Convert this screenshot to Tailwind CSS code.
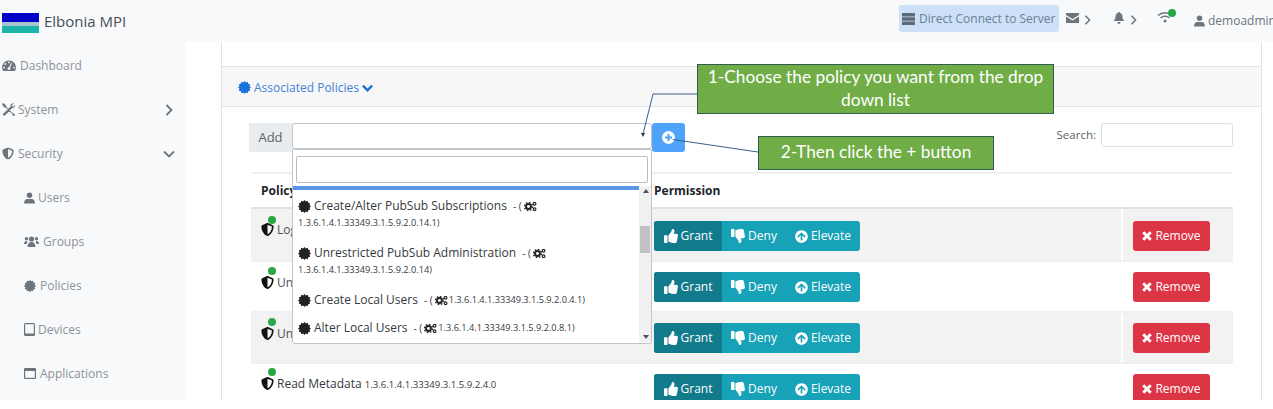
<!DOCTYPE html>
<html lang="en">
<head>
<meta charset="UTF-8">
<title>Elbonia MPI</title>
<script src="https://cdn.jsdelivr.net/npm/@tailwindcss/browser@4"></script>
</head>
<body class="relative w-[1273px] h-[409px] overflow-hidden bg-white font-['Open_Sans',sans-serif] text-[12px] text-[#6c757d]">

<svg class="hidden">
  <defs>
    <symbol id="cert" viewBox="0 0 16 16"><polygon fill="currentColor" points="16,8 14.18,9.66 14.93,12 12.53,12.53 12,14.93 9.66,14.18 8,16 6.34,14.18 4,14.93 3.47,12.53 1.07,12 1.82,9.66 0,8 1.82,6.34 1.07,4 3.47,3.47 4,1.07 6.34,1.82 8,0 9.66,1.82 12,1.07 12.53,3.47 14.93,4 14.18,6.34"/></symbol>
    <symbol id="shield" viewBox="0 0 512 512"><path fill="currentColor" d="M466.5 83.7l-192-80a48.15 48.15 0 0 0-36.9 0l-192 80C27.7 91.1 16 108.6 16 128c0 198.5 114.5 335.7 221.5 380.3 11.8 4.9 25.1 4.9 36.9 0C360.1 472.6 496 349.3 496 128c0-19.4-11.7-36.9-29.5-44.3zM256.1 446.3l-.1-381 175.9 73.3c-3.3 151.4-82.1 261.1-175.8 307.7z"/></symbol>
    <symbol id="cogs" viewBox="0 0 16 12"><circle cx="5.5" cy="6" r="3" fill="none" stroke="currentColor" stroke-width="2.400"/><circle cx="5.5" cy="6" r="5" fill="none" stroke="currentColor" stroke-width="1.600" stroke-dasharray="2 1.900"/><circle cx="13" cy="2.6" r="1.700" fill="none" stroke="currentColor" stroke-width="1.400"/><circle cx="13" cy="9.4" r="1.700" fill="none" stroke="currentColor" stroke-width="1.400"/></symbol>
    <symbol id="up" viewBox="0 0 512 512"><path fill="currentColor" d="M104 224H24c-13.255 0-24 10.745-24 24v240c0 13.255 10.745 24 24 24h80c13.255 0 24-10.745 24-24V248c0-13.255-10.745-24-24-24zM384 81.452c0 42.416-25.97 66.208-33.277 94.548h101.723c33.397 0 59.397 27.746 59.553 58.098.084 17.938-7.546 37.249-19.439 49.197l-.11.11c9.836 23.337 8.237 56.037-9.308 79.469 8.681 25.895-.069 57.704-16.382 74.757 4.298 17.598 2.244 32.575-6.148 44.632C440.202 511.587 389.616 512 346.839 512l-2.845-.001c-48.287-.017-87.806-17.598-119.56-31.725-15.957-7.099-36.821-15.887-52.651-16.178-6.54-.12-11.783-5.457-11.783-11.998v-213.77c0-3.2 1.282-6.271 3.558-8.521 39.614-39.144 56.648-80.587 89.117-113.111 14.804-14.832 20.188-37.236 25.393-58.902C282.515 39.293 291.817 0 312 0c24 0 72 8 72 81.452z"/></symbol>
    <symbol id="down" viewBox="0 0 512 512"><g transform="matrix(1 0 0 -1 0 512)"><path fill="currentColor" d="M104 224H24c-13.255 0-24 10.745-24 24v240c0 13.255 10.745 24 24 24h80c13.255 0 24-10.745 24-24V248c0-13.255-10.745-24-24-24zM384 81.452c0 42.416-25.97 66.208-33.277 94.548h101.723c33.397 0 59.397 27.746 59.553 58.098.084 17.938-7.546 37.249-19.439 49.197l-.11.11c9.836 23.337 8.237 56.037-9.308 79.469 8.681 25.895-.069 57.704-16.382 74.757 4.298 17.598 2.244 32.575-6.148 44.632C440.202 511.587 389.616 512 346.839 512l-2.845-.001c-48.287-.017-87.806-17.598-119.56-31.725-15.957-7.099-36.821-15.887-52.651-16.178-6.54-.12-11.783-5.457-11.783-11.998v-213.77c0-3.2 1.282-6.271 3.558-8.521 39.614-39.144 56.648-80.587 89.117-113.111 14.804-14.832 20.188-37.236 25.393-58.902C282.515 39.293 291.817 0 312 0c24 0 72 8 72 81.452z"/></g></symbol>
    <symbol id="arrow" viewBox="0 0 512 512"><path fill="currentColor" d="M8 256C8 119 119 8 256 8s248 111 248 248-111 248-248 248S8 393 8 256zm143.600 28.900l72.400-75.500V392c0 13.300 10.700 24 24 24h16c13.300 0 24-10.700 24-24V209.400l72.400 75.500c9.300 9.700 24.800 9.900 34.300.4l10.900-11c9.400-9.400 9.400-24.600 0-33.900L273 107.700c-9.400-9.400-24.600-9.400-33.900 0L106.300 240.400c-9.400 9.400-9.400 24.600 0 33.900l10.900 11c9.600 9.500 25.100 9.300 34.400-.4z"/></symbol>
    <symbol id="times" viewBox="0 0 12 12"><path fill="none" stroke="currentColor" stroke-width="3.400" d="M1.500 1.500l9 9M10.500 1.500l-9 9"/></symbol>
    <symbol id="right" viewBox="0 0 8 12"><path fill="none" stroke="currentColor" stroke-width="1.800" d="M1.500 1 6.500 6 1.500 11"/></symbol>
  </defs>
</svg>

<header class="h-[42px] bg-[#f8f9fa] flex items-center">
  <div class="w-[37px] h-[20px] ml-[2px] mt-[3px] flex flex-col">
    <div class="h-[9px] bg-[#0303c8]"></div>
    <div class="h-[4px] bg-[#a8c4cf]"></div>
    <div class="h-[7px] bg-[#1db5a9]"></div>
  </div>
  <span class="ml-[5px] text-[15px] text-[#495057]">Elbonia MPI</span>
  <div class="ml-auto flex items-center h-full text-[#6c757d]">
    <div class="w-[160px] h-[27px] -mt-[5px] rounded-[3px] bg-[#cce1f8] flex items-center pl-[3px] gap-[4px] text-[12px] text-[#6b7f93] whitespace-nowrap">
      <svg class="w-[13px] h-[12px]" viewBox="0 0 13 12"><path fill="#5d6b78" d="M0 0h13v3.400H0zM0 4.300h13v3.400H0zM0 8.600h13V12H0z"/></svg>
      Direct Connect to Server
    </div>
    <div class="ml-[7px] flex items-center w-[47px] -mt-[6px]">
      <svg class="w-[13px] h-[10px]" viewBox="0 0 13 10"><path fill="#6c757d" d="M0 0h13v2L6.500 6 0 2ZM0 3.500 6.500 7.500 13 3.500V10H0Z"/></svg>
      <svg class="w-[7px] h-[10px] ml-[5px] mt-[3px]" viewBox="0 0 8 12"><use href="#right"/></svg>
    </div>
    <div class="flex items-center w-[44px] -mt-[6px]">
      <svg class="w-[12px] h-[12px]" viewBox="0 0 12 12"><path fill="#6c757d" d="M6 0c.6 0 1 .4 1 1 2 .5 2.500 2 2.500 4 0 2 1 3 2 4H.5c1-1 2-2 2-4 0-2 .5-3.500 2.500-4 0-.6.4-1 1-1ZM4.500 10h3C7.500 11 7 12 6 12s-1.500-1-1.500-2Z"/></svg>
      <svg class="w-[7px] h-[10px] ml-[5px] mt-[3px]" viewBox="0 0 8 12"><use href="#right"/></svg>
    </div>
    <div class="relative w-[37px] -mt-[9px]">
      <svg class="w-[16px] h-[12px]" viewBox="0 0 16 12"><path fill="none" stroke="#6c757d" stroke-width="1.500" d="M1 4.500C5 .8 11 .8 15 4.500M3.500 7C6 4.800 10 4.800 12.500 7"/><circle cx="8" cy="10" r="1.500" fill="#6c757d"/></svg>
      <span class="absolute left-[11px] -top-[2px] w-[8px] h-[8px] rounded-full bg-[#28a745]"></span>
    </div>
    <div class="flex items-center w-[79px] gap-[2px] text-[12px] whitespace-nowrap overflow-hidden">
      <svg class="w-[11px] h-[12px] shrink-0" viewBox="0 0 12 12"><circle cx="6" cy="3" r="3" fill="#6c757d"/><path fill="#6c757d" d="M0 12c0-3 1.500-5 3.500-5h5c2 0 3.500 2 3.500 5Z"/></svg>
      <span class="ml-[1px]">demoadmin</span>
    </div>
  </div>
</header>

<div class="flex h-[358px] overflow-hidden">
  <aside class="w-[185px] shrink-0 bg-[#f8f9fa] pt-[1px] text-[#8d9399]">
    <div class="h-[44px] flex items-center pl-[2px] gap-[4px] pt-[1px]">
      <svg class="w-[14px] h-[12px]" viewBox="0 0 14 12"><path fill="#6c757d" d="M7 .5a7 7 0 0 1 6 10.500H1A7 7 0 0 1 7 .5Z"/><g fill="#f8f9fa"><circle cx="7" cy="2.400" r=".9"/><circle cx="3.300" cy="4" r=".9"/><circle cx="2" cy="7.600" r=".9"/><circle cx="12" cy="7.600" r=".9"/><circle cx="7" cy="8.600" r="1.400"/></g><path stroke="#f8f9fa" stroke-width="1.100" d="M7 8.500 9.600 3.300"/></svg>
      Dashboard
    </div>
    <div class="h-[44px] flex items-center pl-[2px] gap-[3px] pt-[1px]">
      <svg class="w-[13px] h-[13px]" viewBox="0 0 13 13"><path fill="#6c757d" d="M1.200 0 4.200 2.400V3.800L11 10.400C11.800 10.200 12.800 11.300 13 12 12.800 12.600 12.400 13 11.800 13 11 12.700 10.100 11.900 10.300 11.100L3.500 4.400H2.100L0 1.300ZM12.700 1.800C13.300 3.300 12.500 5.300 10.300 5.100L2.900 12.400C1.900 13.400.3 11.900 1.200 10.800L8.600 3.600C8.300 1.600 9.900.1 11.700.4L9.900 2.200 10.300 3.400 11.500 3.700Z"/></svg>
      System
      <svg class="w-[8px] h-[12px] ml-auto mr-[12px] text-[#6c757d]" viewBox="0 0 8 12"><use href="#right"/></svg>
    </div>
    <div class="h-[44px] flex items-center pl-[2px] gap-[4px] pt-[1px]">
      <svg class="w-[12px] h-[13px] text-[#6c757d]" viewBox="0 0 512 512"><use href="#shield"/></svg>
      Security
      <svg class="w-[12px] h-[8px] ml-auto mr-[10px] text-[#6c757d]" viewBox="0 0 12 8"><path fill="none" stroke="currentColor" stroke-width="1.800" d="M1 1.500 6 6.500 11 1.500"/></svg>
    </div>
    <div class="h-[44px] flex items-center pl-[24px] gap-[3px] pt-[1px]">
      <svg class="w-[11px] h-[12px]" viewBox="0 0 12 12"><circle cx="6" cy="3" r="3" fill="#6c757d"/><path fill="#6c757d" d="M0 12c0-3 1.500-5 3.500-5h5c2 0 3.500 2 3.500 5Z"/></svg>
      Users
    </div>
    <div class="h-[44px] flex items-center pl-[24px] gap-[4px] pt-[1px]">
      <svg class="w-[15px] h-[11px]" viewBox="0 0 15 11"><circle cx="7.500" cy="3" r="2.600" fill="#6c757d"/><circle cx="2.500" cy="2.800" r="1.700" fill="#6c757d"/><circle cx="12.500" cy="2.800" r="1.700" fill="#6c757d"/><path fill="#6c757d" d="M3.500 11c0-3 1.500-5 4-5s4 2 4 5ZM0 8c0-2 1-3 2.500-3L3.500 6 2.500 8ZM15 8c0-2-1-3-2.500-3L11.500 6l1 2Z"/></svg>
      Groups
    </div>
    <div class="h-[44px] flex items-center pl-[24px] gap-[4px] pt-[1px]">
      <svg class="w-[12px] h-[12px] text-[#6c757d]" viewBox="0 0 16 16"><use href="#cert"/></svg>
      Policies
    </div>
    <div class="h-[44px] flex items-center pl-[24px] gap-[3px] pt-[1px]">
      <svg class="w-[11px] h-[13px]" viewBox="0 0 11 13"><rect width="11" height="13" rx="1.500" fill="#6c757d"/><rect x="1.200" y="1.200" width="8.600" height="9.300" fill="#f8f9fa"/></svg>
      Devices
    </div>
    <div class="h-[44px] flex items-center pl-[24px] gap-[4px] pt-[1px]">
      <svg class="w-[12px] h-[11px]" viewBox="0 0 12 11"><rect width="12" height="11" rx="1" fill="#6c757d"/><rect x="1.200" y="3" width="9.600" height="6.800" fill="#f8f9fa"/></svg>
      Applications
    </div>
  </aside>

  <main class="flex-1 pl-[36px]">
    <section class="w-[1041px] h-full border-x border-[#dfe2e6] pt-[24px] text-[#495057]">
      <div class="h-[41px] border-y border-[#e3e5e8] bg-[#f7f7f7] flex items-center pl-[16px] pt-[2px] gap-[3px] text-[#3f83d6]">
        <svg class="w-[13px] h-[13px] text-[#1a73d8]" viewBox="0 0 16 16"><use href="#cert"/></svg>
        Associated Policies
        <svg class="w-[11px] h-[8px] text-[#1a6fd0]" viewBox="0 0 12 8"><path fill="none" stroke="currentColor" stroke-width="2.600" d="M1 1.500 6 6.500 11 1.500"/></svg>
      </div>

      <div class="pl-[27px] pr-[28px] pt-[16px]">
        <div class="flex items-start h-[49px]">
          <div class="w-[43px] h-[29px] bg-[#e9ecef] flex items-center justify-center text-[#5c636a] text-[13px]">Add</div>
          <div class="w-[360px] h-[26px] border border-[#bfc4c9] rounded-[3px] bg-white"></div>
          <div class="w-[33px] h-[29px] rounded-[3px] bg-[#4fa3fb] flex items-center justify-center">
            <svg class="w-[13px] h-[13px]" viewBox="0 0 13 13"><circle cx="6.500" cy="6.500" r="6.500" fill="#fff"/><path stroke="#4fa3fb" stroke-width="2" d="M6.500 3v7M3 6.500h7"/></svg>
          </div>
          <div class="ml-auto flex items-center gap-[5px] text-[11.5px] text-[#5c636a]">
            Search:
            <div class="w-[132px] h-[24px] border border-[#dde0e4] rounded-[3px] bg-white"></div>
          </div>
        </div>

        <div class="ml-[2px]">
          <div class="flex h-[37px] border-t-2 border-[#eef0f2] border-b-2 border-b-[#dee2e6] items-center font-bold text-[#212529] text-[12px]">
            <div class="w-[403px] pl-[10px]">Policy</div>
            <div>Permission</div>
          </div>

          <div class="flex h-[53px] bg-[#f2f2f2] border-b-2 border-[#eef0f2]">
            <div class="w-[393px] relative flex items-start pt-[13px] pl-[10px] gap-[3px]">
              <span class="absolute left-[17px] top-[7px] w-[8px] h-[8px] rounded-full bg-[#28a745]"></span>
              <svg class="w-[13px] h-[15px] text-[#111]" viewBox="0 0 512 512"><use href="#shield"/></svg>
              <span class="w-[15px] -mt-[1px] overflow-hidden whitespace-nowrap">Log</span>
            </div>
            <div class="w-[477px] pl-[10px] pt-[12px]">
              <div class="flex w-[206px] h-[30px] rounded-[3px] overflow-hidden text-white bg-[#17a2b8]">
                <div class="w-[68px] bg-[#117a8b] flex items-center justify-center gap-[3px]"><svg class="w-[14px] h-[14px]" viewBox="0 0 512 512"><use href="#up"/></svg>Grant</div>
                <div class="w-[64px] flex items-center justify-center gap-[3px]"><svg class="w-[14px] h-[14px]" viewBox="0 0 512 512"><use href="#down"/></svg>Deny</div>
                <div class="flex-1 flex items-center justify-center gap-[3px]"><svg class="w-[13px] h-[13px]" viewBox="0 0 512 512"><use href="#arrow"/></svg>Elevate</div>
              </div>
            </div>
            <div class="flex-1 border-l-2 border-white pl-[10px] pt-[12px]">
              <div class="w-[77px] h-[30px] rounded-[3px] bg-[#dc3545] text-white flex items-center justify-center gap-[3px]"><svg class="w-[10px] h-[10px]" viewBox="0 0 12 12"><use href="#times"/></svg>Remove</div>
            </div>
          </div>

          <div class="flex h-[51px] bg-white border-b-2 border-[#eef0f2]">
            <div class="w-[393px] relative flex items-start pt-[13px] pl-[10px] gap-[3px]">
              <span class="absolute left-[17px] top-[5px] w-[8px] h-[8px] rounded-full bg-[#28a745]"></span>
              <svg class="w-[13px] h-[15px] text-[#111]" viewBox="0 0 512 512"><use href="#shield"/></svg>
              <span class="w-[15px] -mt-[1px] overflow-hidden whitespace-nowrap">Un</span>
            </div>
            <div class="w-[477px] pl-[10px] pt-[10px]">
              <div class="flex w-[206px] h-[30px] rounded-[3px] overflow-hidden text-white bg-[#17a2b8]">
                <div class="w-[68px] bg-[#117a8b] flex items-center justify-center gap-[3px]"><svg class="w-[14px] h-[14px]" viewBox="0 0 512 512"><use href="#up"/></svg>Grant</div>
                <div class="w-[64px] flex items-center justify-center gap-[3px]"><svg class="w-[14px] h-[14px]" viewBox="0 0 512 512"><use href="#down"/></svg>Deny</div>
                <div class="flex-1 flex items-center justify-center gap-[3px]"><svg class="w-[13px] h-[13px]" viewBox="0 0 512 512"><use href="#arrow"/></svg>Elevate</div>
              </div>
            </div>
            <div class="flex-1 border-l-2 border-white pl-[10px] pt-[10px]">
              <div class="w-[77px] h-[30px] rounded-[3px] bg-[#dc3545] text-white flex items-center justify-center gap-[3px]"><svg class="w-[10px] h-[10px]" viewBox="0 0 12 12"><use href="#times"/></svg>Remove</div>
            </div>
          </div>

          <div class="flex h-[51px] bg-[#f2f2f2] border-b-2 border-[#eef0f2]">
            <div class="w-[393px] relative flex items-start pt-[13px] pl-[10px] gap-[3px]">
              <span class="absolute left-[17px] top-[5px] w-[8px] h-[8px] rounded-full bg-[#28a745]"></span>
              <svg class="w-[13px] h-[15px] text-[#111]" viewBox="0 0 512 512"><use href="#shield"/></svg>
              <span class="w-[15px] -mt-[1px] overflow-hidden whitespace-nowrap">Un</span>
            </div>
            <div class="w-[477px] pl-[10px] pt-[10px]">
              <div class="flex w-[206px] h-[30px] rounded-[3px] overflow-hidden text-white bg-[#17a2b8]">
                <div class="w-[68px] bg-[#117a8b] flex items-center justify-center gap-[3px]"><svg class="w-[14px] h-[14px]" viewBox="0 0 512 512"><use href="#up"/></svg>Grant</div>
                <div class="w-[64px] flex items-center justify-center gap-[3px]"><svg class="w-[14px] h-[14px]" viewBox="0 0 512 512"><use href="#down"/></svg>Deny</div>
                <div class="flex-1 flex items-center justify-center gap-[3px]"><svg class="w-[13px] h-[13px]" viewBox="0 0 512 512"><use href="#arrow"/></svg>Elevate</div>
              </div>
            </div>
            <div class="flex-1 border-l-2 border-white pl-[10px] pt-[10px]">
              <div class="w-[77px] h-[30px] rounded-[3px] bg-[#dc3545] text-white flex items-center justify-center gap-[3px]"><svg class="w-[10px] h-[10px]" viewBox="0 0 12 12"><use href="#times"/></svg>Remove</div>
            </div>
          </div>

          <div class="flex h-[51px] bg-white">
            <div class="w-[393px] relative flex items-start pt-[12px] pl-[10px] gap-[3px] whitespace-nowrap">
              <span class="absolute left-[17px] top-[4px] w-[8px] h-[8px] rounded-full bg-[#28a745]"></span>
              <svg class="w-[13px] h-[15px] text-[#111]" viewBox="0 0 512 512"><use href="#shield"/></svg>
              <span class="-mt-[1px] text-[#343a40] text-[12px]">Read Metadata <span class="text-[9.6px]">1.3.6.1.4.1.33349.3.1.5.9.2.4.0</span></span>
            </div>
            <div class="w-[477px] pl-[10px] pt-[10px]">
              <div class="flex w-[206px] h-[30px] rounded-[3px] overflow-hidden text-white bg-[#17a2b8]">
                <div class="w-[68px] bg-[#117a8b] flex items-center justify-center gap-[3px]"><svg class="w-[14px] h-[14px]" viewBox="0 0 512 512"><use href="#up"/></svg>Grant</div>
                <div class="w-[64px] flex items-center justify-center gap-[3px]"><svg class="w-[14px] h-[14px]" viewBox="0 0 512 512"><use href="#down"/></svg>Deny</div>
                <div class="flex-1 flex items-center justify-center gap-[3px]"><svg class="w-[13px] h-[13px]" viewBox="0 0 512 512"><use href="#arrow"/></svg>Elevate</div>
              </div>
            </div>
            <div class="flex-1 border-l-2 border-white pl-[10px] pt-[10px]">
              <div class="w-[77px] h-[30px] rounded-[3px] bg-[#dc3545] text-white flex items-center justify-center gap-[3px]"><svg class="w-[10px] h-[10px]" viewBox="0 0 12 12"><use href="#times"/></svg>Remove</div>
            </div>
          </div>
        </div>
      </div>
    </section>
  </main>
</div>

<!-- dropdown over the table -->
<div class="absolute left-[292px] top-[149px] w-[360px] h-[195px] bg-white border border-[#bfc4c9] rounded-b-[3px] text-[#343a40]">
  <div class="mx-[3px] mt-[6px] h-[27px] border border-[#b9bec3] rounded-[2px]"></div>
  <div class="flex mt-[3px] h-[156px]">
    <div class="w-[346px] overflow-hidden">
      <div class="h-[4px] bg-[#5a95e6]"></div>
      <div class="h-[47px] pl-[5px] pt-[7px]">
        <div class="flex items-center gap-[3px] text-[12px] whitespace-nowrap"><svg class="w-[13px] h-[13px] text-[#222]" viewBox="0 0 16 16"><use href="#cert"/></svg>Create/Alter PubSub Subscriptions <span class="text-[10px] ml-[3px] -mr-[1px]">- (</span><svg class="w-[13px] h-[11px] text-[#222]" viewBox="0 0 16 12"><use href="#cogs"/></svg></div>
        <div class="text-[9.2px] mt-[1px]">1.3.6.1.4.1.33349.3.1.5.9.2.0.14.1)</div>
      </div>
      <div class="h-[47px] pl-[5px] pt-[7px]">
        <div class="flex items-center gap-[3px] text-[12px] whitespace-nowrap"><svg class="w-[13px] h-[13px] text-[#222]" viewBox="0 0 16 16"><use href="#cert"/></svg>Unrestricted PubSub Administration <span class="text-[10px] ml-[3px] -mr-[1px]">- (</span><svg class="w-[13px] h-[11px] text-[#222]" viewBox="0 0 16 12"><use href="#cogs"/></svg></div>
        <div class="text-[9.2px] mt-[1px]">1.3.6.1.4.1.33349.3.1.5.9.2.0.14)</div>
      </div>
      <div class="h-[29px] pl-[5px] pt-[7px]">
        <div class="flex items-center gap-[3px] text-[12px] whitespace-nowrap"><svg class="w-[13px] h-[13px] text-[#222]" viewBox="0 0 16 16"><use href="#cert"/></svg>Create Local Users <span class="text-[10px] ml-[3px] -mr-[1px]">- (</span><svg class="w-[13px] h-[11px] text-[#222]" viewBox="0 0 16 12"><use href="#cogs"/></svg><span class="text-[9.2px] -ml-[2px]">1.3.6.1.4.1.33349.3.1.5.9.2.0.4.1)</span></div>
      </div>
      <div class="pl-[5px] pt-[6px]">
        <div class="flex items-center gap-[3px] text-[12px] whitespace-nowrap"><svg class="w-[13px] h-[13px] text-[#222]" viewBox="0 0 16 16"><use href="#cert"/></svg>Alter Local Users <span class="text-[10px] ml-[3px] -mr-[1px]">- (</span><svg class="w-[13px] h-[11px] text-[#222]" viewBox="0 0 16 12"><use href="#cogs"/></svg><span class="text-[9.2px] -ml-[2px]">1.3.6.1.4.1.33349.3.1.5.9.2.0.8.1)</span></div>
      </div>
    </div>
    <div class="flex-1 bg-[#f1f1f1] relative">
      <span class="absolute left-[4px] top-[3px] w-0 h-0 border-x-[3px] border-x-transparent border-b-[4px] border-b-[#505050]"></span>
      <span class="absolute left-[1px] top-[40px] w-[10px] h-[27px] bg-[#c1c1c1]"></span>
      <span class="absolute left-[4px] bottom-[3px] w-0 h-0 border-x-[3px] border-x-transparent border-t-[4px] border-t-[#505050]"></span>
    </div>
  </div>
</div>

<!-- annotations -->
<svg class="absolute left-0 top-0 w-[1273px] h-[409px] pointer-events-none" viewBox="0 0 1273 409">
  <path fill="none" stroke="#3b5f8a" d="M697 94H653L643 134"/>
  <path fill="#333" d="M641 133h4l-2 4Z"/>
  <path fill="none" stroke="#3b5f8a" d="M673 139.500 758 152"/>
</svg>
<div class="absolute left-[697px] top-[64px] w-[357px] h-[50px] pb-[2px] bg-[#70ad47] border border-[#2f5d50] flex items-center justify-center text-center font-['Lato',sans-serif] text-[17.3px] leading-[23px] text-white">1-Choose the policy you want from the drop<br>down list</div>
<div class="absolute left-[758px] top-[136px] w-[236px] h-[34px] pb-[2px] bg-[#70ad47] border border-[#2f5d50] flex items-center justify-center font-['Lato',sans-serif] text-[17.3px] text-white">2-Then click the + button</div>

</body>
</html>
